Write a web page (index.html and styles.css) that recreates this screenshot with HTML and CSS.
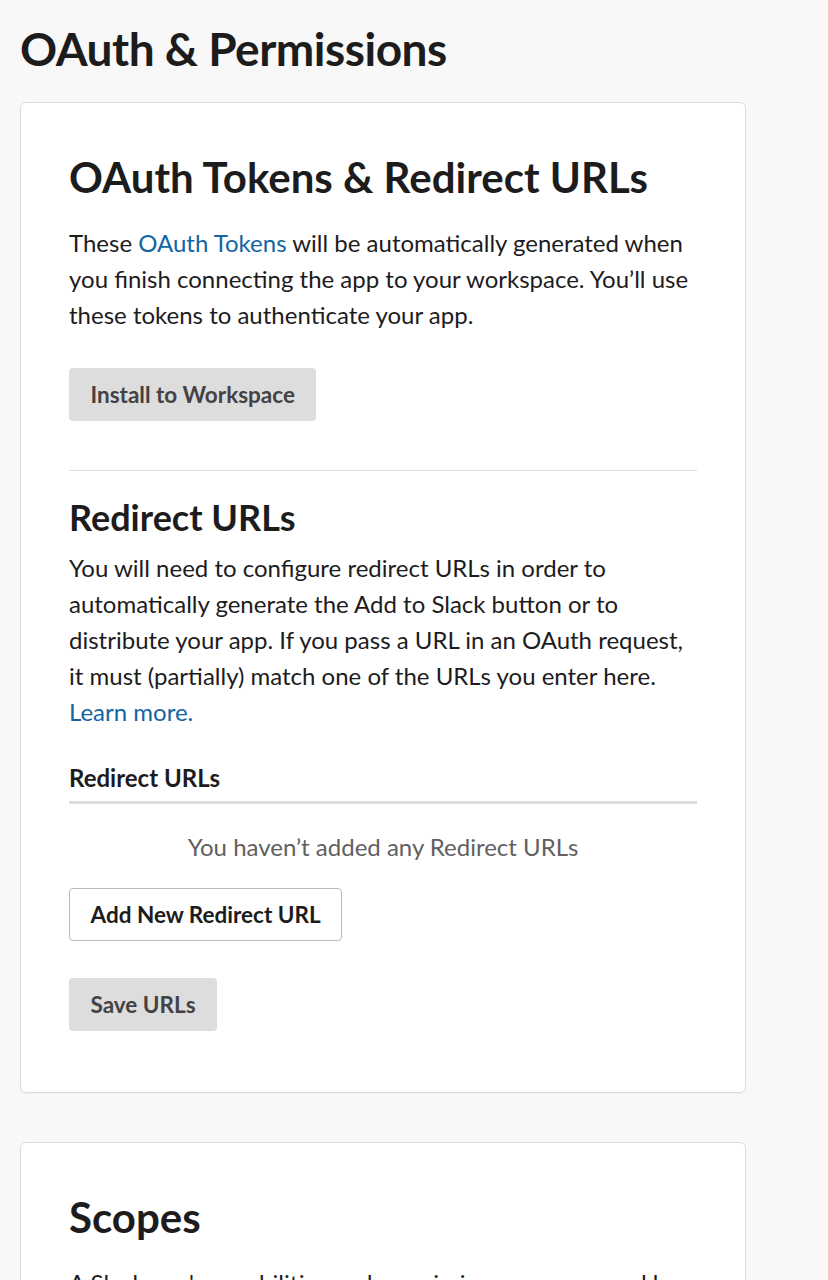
FILE: index.html
```html
<!DOCTYPE html>
<html lang="en">
<head>
  <meta charset="UTF-8">
  <meta name="viewport" content="width=device-width, initial-scale=1.0">
  <title>OAuth &amp; Permissions</title>
  <link rel="stylesheet" href="styles.css">
</head>
<body>
  <div class="page">
    <h1 class="page-title">OAuth &amp; Permissions</h1>

    <!-- Tokens + redirect URLs -->
    <section class="card">
      <h2 class="card-title">OAuth Tokens &amp; Redirect URLs</h2>
      <p class="text">These <a href="#" class="link">OAuth Tokens</a> will be automatically generated when you finish connecting the app to your workspace. You’ll use these tokens to authenticate your app.</p>
      <button class="btn btn-disabled btn-install">Install to Workspace</button>

      <hr class="divider">

      <h3 class="sub-title">Redirect URLs</h3>
      <p class="text text-tight">You will need to configure redirect URLs in order to automatically generate the Add to Slack button or to distribute your app. If you pass a URL in an OAuth request, it must (partially) match one of the URLs you enter here. <a href="#" class="link">Learn more.</a></p>

      <div class="url-list">
        <h5 class="url-list-head">Redirect URLs</h5>
        <p class="empty">You haven’t added any Redirect URLs</p>
      </div>

      <button class="btn btn-outline">Add New Redirect URL</button>
      <div>
        <button class="btn btn-disabled btn-save">Save URLs</button>
      </div>
    </section>

    <!-- Scopes -->
    <section class="card">
      <h2 class="card-title">Scopes</h2>
      <p class="text">A Slack app's capabilities and permissions are governed by the scopes it requests.</p>
    </section>
  </div>
</body>
</html>
```

FILE: styles.css
```css
* {
  margin: 0;
  padding: 0;
  box-sizing: border-box;
}

body {
  background-color: #f8f8f8;
  font-family: Lato, "Open Sans", sans-serif;
  color: #1d1c1d;
}

.page {
  padding: 17px 82px 0 20px;
}

.page-title {
  font-size: 46px;
  font-weight: 700;
  line-height: 64px;
  letter-spacing: -0.5px;
  margin-bottom: 21px;
}

.card {
  background: #fff;
  border: 1px solid #ddd;
  border-radius: 6px;
  padding: 46px 48px 61px;
  margin-bottom: 49px;
  box-shadow: 0 1px 2px rgba(0, 0, 0, 0.04);
}

.card-title {
  font-size: 42px;
  font-weight: 700;
  line-height: 56px;
  margin-bottom: 20px;
}

.text {
  font-size: 24px;
  line-height: 36px;
}

.text-tight {
  margin-top: 9px;
}

.link {
  color: #1264a3;
  text-decoration: none;
}

.btn {
  font-family: inherit;
  font-size: 22.5px;
  font-weight: 700;
  height: 53px;
  padding: 0 21.5px;
  border-radius: 4px;
  cursor: pointer;
}

.btn-disabled {
  background: #dddddd;
  color: #454245;
  border: none;
}

.btn-install {
  margin-top: 35px;
}

.btn-outline {
  background: #fff;
  color: #1d1c1d;
  border: 1px solid #bbbabb;
  padding: 0 20.5px;
}

.btn-save {
  margin-top: 37px;
}

.divider {
  border: none;
  border-top: 1px solid #dddddd;
  margin: 49px 0 22px;
}

.sub-title {
  font-size: 36px;
  font-weight: 700;
  line-height: 48px;
}

.url-list {
  margin-top: 32px;
  margin-bottom: 23px;
}

.url-list-head {
  font-size: 24px;
  font-weight: 700;
  line-height: 32px;
  padding-bottom: 7px;
  border-bottom: 3px solid #dddddd;
}

.empty {
  text-align: center;
  color: #616061;
  font-size: 24px;
  line-height: 36px;
  margin-top: 25px;
}
```
